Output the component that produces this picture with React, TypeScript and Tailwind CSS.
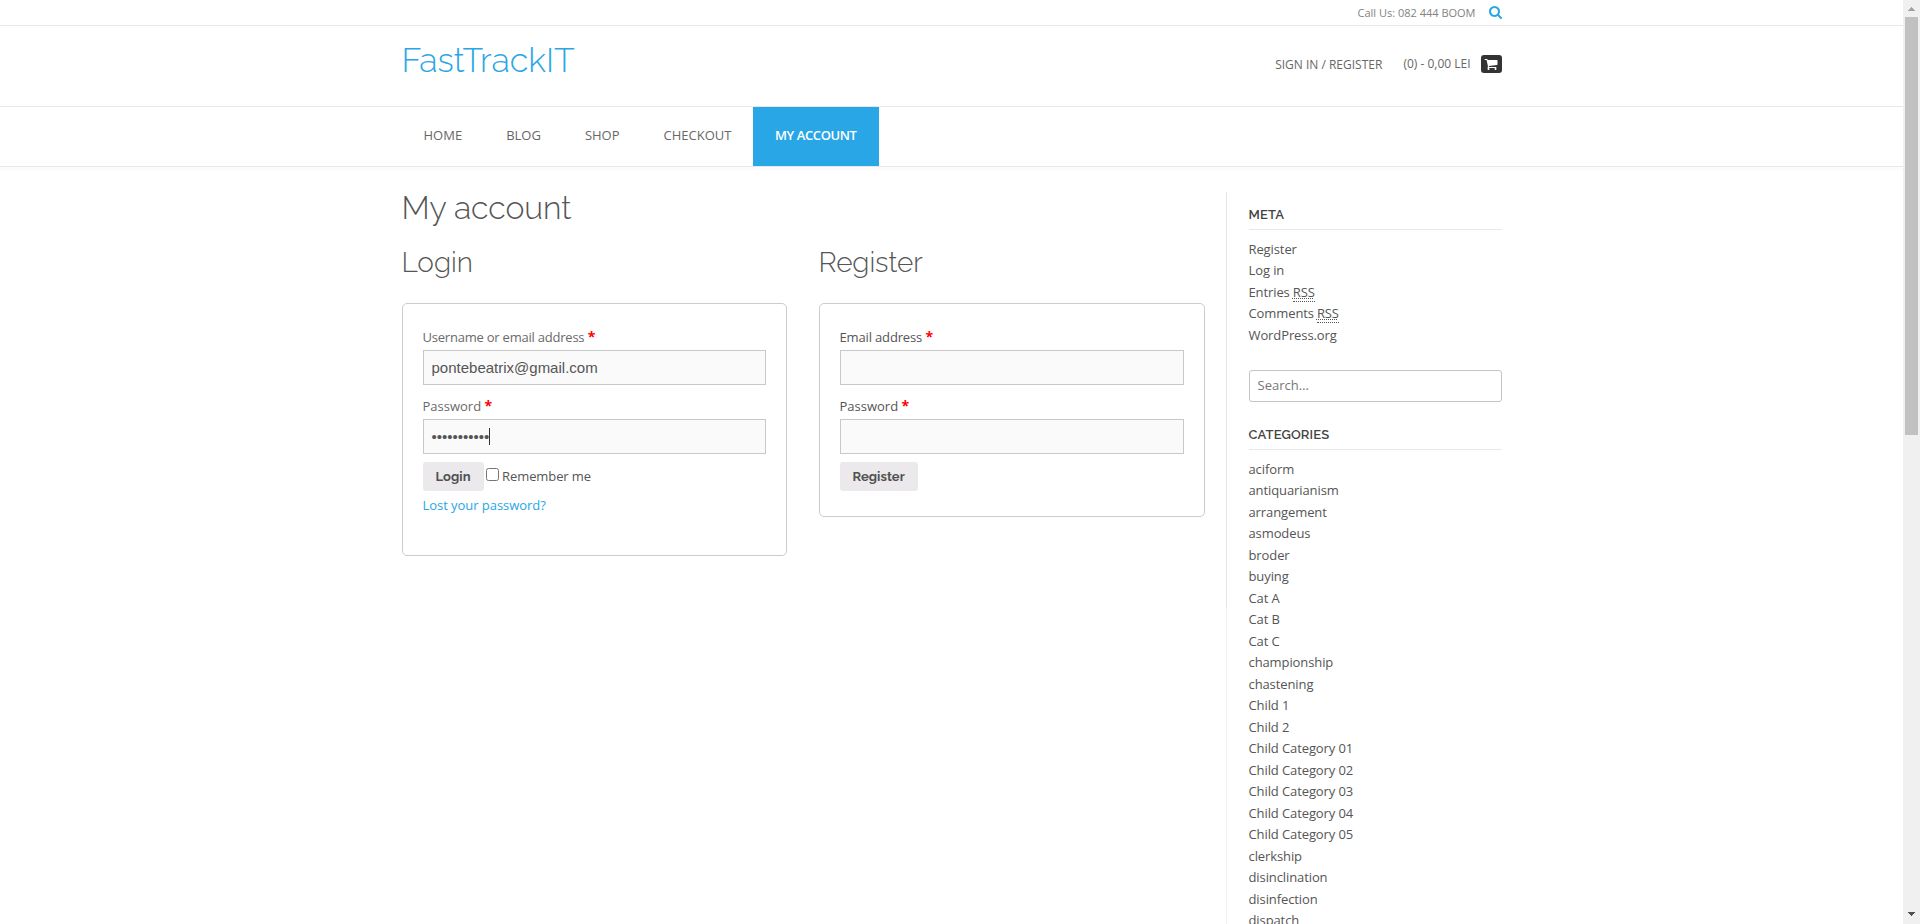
import React from "react";

const NAV = ["Home", "Blog", "Shop", "Checkout", "My Account"];

const CATEGORIES = [
  "aciform", "antiquarianism", "arrangement", "asmodeus", "broder", "buying",
  "Cat A", "Cat B", "Cat C", "championship", "chastening", "Child 1", "Child 2",
  "Child Category 01", "Child Category 02", "Child Category 03",
  "Child Category 04", "Child Category 05", "clerkship", "disinclination",
  "disinfection", "dispatch",
];

function SearchIcon() {
  return (
    <svg viewBox="0 0 1664 1664" className="mb-px h-[13px] w-[13px] fill-[#29a6e5]">
      <path d="M1152 704q0-185-131.500-316.500t-316.500-131.500-316.500 131.500-131.500 316.500 131.500 316.500 316.500 131.500 316.500-131.500 131.500-316.500zm512 832q0 52-38 90t-90 38q-54 0-90-38l-343-342q-179 124-399 124-143 0-273.500-55.500t-225-150-150-225-55.500-273.500 55.500-273.500 150-225 225-150 273.500-55.500 273.500 55.500 225 150 150 225 55.500 273.500q0 220-124 399l343 343q37 37 37 90z" />
    </svg>
  );
}

function CartIcon() {
  return (
    <svg viewBox="0 0 1792 1792" className="mb-px h-[14px] w-[14px] fill-white">
      <path d="M704 1536q0 52-38 90t-90 38-90-38-38-90 38-90 90-38 90 38 38 90zm896 0q0 52-38 90t-90 38-90-38-38-90 38-90 90-38 90 38 38 90zm128-1088v512q0 24-16.500 42.500t-40.500 21.500l-1044 122q13 60 13 70 0 16-24 64h920q26 0 45 19t19 45-19 45-45 19h-1024q-26 0-45-19t-19-45q0-11 8-31.500t16-36 21.500-40 15.500-29.500l-177-823h-204q-26 0-45-19t-19-45 19-45 45-19h256q16 0 28.500 6.500t19.500 15.500 13 24.500 8 26 5.500 29.500 4.500 26h1201q26 0 45 19t19 45z" />
    </svg>
  );
}

function Field({ label, muted, children }: { label: string; muted?: boolean; children?: React.ReactNode }) {
  return (
    <div className="mb-2">
      <div className={muted ? "h-[26px] leading-[26px] text-[#6a6a6a]" : "h-[26px] leading-[26px]"}>
        <span className={label.length > 12 ? (muted ? "tracking-[-0.22px]" : "tracking-[-0.15px]") : ""}>{label}</span>{" "}
        <span className="text-[14px] font-bold text-[#f00]">*</span>
      </div>
      <div className="flex h-[35px] items-center border border-[#c8c8c8] bg-[#fafafa] px-2 font-['Liberation_Sans',sans-serif] text-[15px]">
        {children}
      </div>
    </div>
  );
}

function Button({ children }: { children: React.ReactNode }) {
  return (
    <button className="h-[29px] rounded-[3px] bg-[#ebe9eb] px-[13px] font-['Raleway','Lato',sans-serif] text-[13px] font-bold tracking-[0.05px] text-[#515151]">
      {children}
    </button>
  );
}

function Widget({ title, children }: { title: string; children: React.ReactNode }) {
  return (
    <section>
      <h4 className="mb-2 h-[27px] border-b border-[#e8e8e8] font-['Raleway','Lato',sans-serif] text-[13px] leading-[23px] font-semibold tracking-[0.15px] text-[#444] uppercase">
        {title}
      </h4>
      <ul className="pt-[0.75px] leading-[21.5px] tracking-[-0.1px]">{children}</ul>
    </section>
  );
}

function Rss() {
  return (
    <span className="inline-block h-[20px] border-b border-dotted border-[#555] leading-[21.5px] underline decoration-dotted decoration-1 underline-offset-1">
      RSS
    </span>
  );
}

export default function App() {
  return (
    <div className="flex h-[924px] w-[1920px] overflow-hidden bg-white font-['Open_Sans',sans-serif] text-[13px] text-[#555]">
      <div className="w-[1903px] shrink-0">
        <div className="h-[26px] border-b border-[#e8e8e8]">
          <div className="mx-auto flex h-[25px] w-[1100px] items-center justify-end gap-[13px] text-[11px] text-[#838383]">
            <span className="pt-px">Call Us: 082 444 BOOM</span>
            <SearchIcon />
          </div>
        </div>

        <header className="h-[81px] border-b border-[#e8e8e8]">
          <div className="mx-auto flex w-[1100px] justify-between">
            <div className="pt-[14px] font-['Raleway','Lato',sans-serif] text-[34px] leading-[40px] font-light text-[#29a6e5]">
              FastTrackIT
            </div>
            <div className="flex pt-[29px] text-[12px] leading-[18px] text-[#676767] uppercase">
              <span className="mr-[21px] pt-px">Sign In / Register</span>
              <span>(0) - 0,00 lei</span>
              <span className="ml-[10px] flex h-[18px] w-[21px] items-center justify-center rounded-[3px] bg-[#333]">
                <CartIcon />
              </span>
            </div>
          </div>
        </header>

        <nav className="h-[60px] border-b border-[#e8e8e8]">
          <ul className="mx-auto flex h-[59px] w-[1100px] uppercase">
            {NAV.map((item) => (
              <li
                key={item}
                className={
                  item === "My Account"
                    ? "bg-[#29a6e5] pr-[22.5px] pl-[21.5px] leading-[57px] font-semibold tracking-[-0.4px] text-white"
                    : "px-[22px] leading-[57px] text-[#676767]"
                }
              >
                {item}
              </li>
            ))}
          </ul>
        </nav>
        <div className="h-1 bg-[#fcfcfc]" />

        <div className="mx-auto flex w-[1100px] pt-[21px]">
          <main className="flex h-[416px] w-[825px] shrink-0 flex-col border-r border-black/5">
            <h1 className="h-[56px] font-['Raleway','Lato',sans-serif] text-[32px] leading-[32px] font-light tracking-[-0.1px]">
              My account
            </h1>
            <div className="flex gap-[32px]">
              <div className="w-[385px]">
                <h2 className="h-[55px] font-['Raleway','Lato',sans-serif] text-[28px] leading-[30px] font-light">Login</h2>
                <form className="h-[253px] rounded-[5px] border border-[#ccc] px-5 pt-[20px]">
                  <Field label="Username or email address" muted>
                    <span className="pt-px">pontebeatrix@gmail.com</span>
                  </Field>
                  <Field label="Password" muted>
                    <span className="pt-px">•••••••••••</span>
                    <span className="h-[17px] w-px bg-[#333]" />
                  </Field>
                  <div className="flex items-center">
                    <Button>Login</Button>
                    <span className="mt-[-4px] mr-[3px] ml-[2.5px] h-[13px] w-[13px] rounded-[2.5px] border border-[#767676] bg-white" />
                    <span className="tracking-[-0.1px]">Remember me</span>
                  </div>
                  <a className="block leading-[28px] tracking-[-0.05px] text-[#29a6e5]">Lost your password?</a>
                </form>
              </div>
              <div className="w-[386px]">
                <h2 className="h-[55px] font-['Raleway','Lato',sans-serif] text-[28px] leading-[30px] font-light tracking-[-0.1px]">Register</h2>
                <form className="h-[214px] rounded-[5px] border border-[#ccc] px-5 pt-[20px]">
                  <Field label="Email address" />
                  <Field label="Password" />
                  <Button>Register</Button>
                </form>
              </div>
            </div>
          </main>

          <aside className="ml-[-1px] h-[732px] w-[276px] shrink-0 border-l border-black/5 pt-[11px] pl-[22px]">
            <Widget title="Meta">
              <li>Register</li>
              <li>Log in</li>
              <li className="flex h-[21.5px] gap-[3px]">Entries <Rss /></li>
              <li className="flex h-[21.5px] gap-[3px]">Comments <Rss /></li>
              <li>WordPress.org</li>
            </Widget>
            <div className="mt-[23.75px] mb-[21px] flex h-[32px] items-center rounded-[3px] border border-[#c4c4c4] px-2 text-[#777]">
              Search…
            </div>
            <Widget title="Categories">
              {CATEGORIES.map((c) => (
                <li key={c}>{c}</li>
              ))}
            </Widget>
          </aside>
        </div>
      </div>

      <div className="flex w-[17px] shrink-0 flex-col items-center bg-[#f0f0f0]">
        <svg viewBox="0 0 17 17" className="h-[17px] w-[17px] shrink-0 fill-[#a3a3a3]">
          <path d="M5 11h7v-1h-1v-1h-1v-1h-1v-1h-1v1h-1v1h-1v1h-1z" />
        </svg>
        <div className="h-[418px] w-[13px] bg-[#c1c1c1]" />
        <svg viewBox="0 0 17 17" className="mt-auto h-[17px] w-[17px] shrink-0 fill-[#505050]">
          <path d="M5 5h7v1h-1v1h-1v1h-1v1h-1v-1h-1v-1h-1v-1h-1z" />
        </svg>
      </div>
    </div>
  );
}
